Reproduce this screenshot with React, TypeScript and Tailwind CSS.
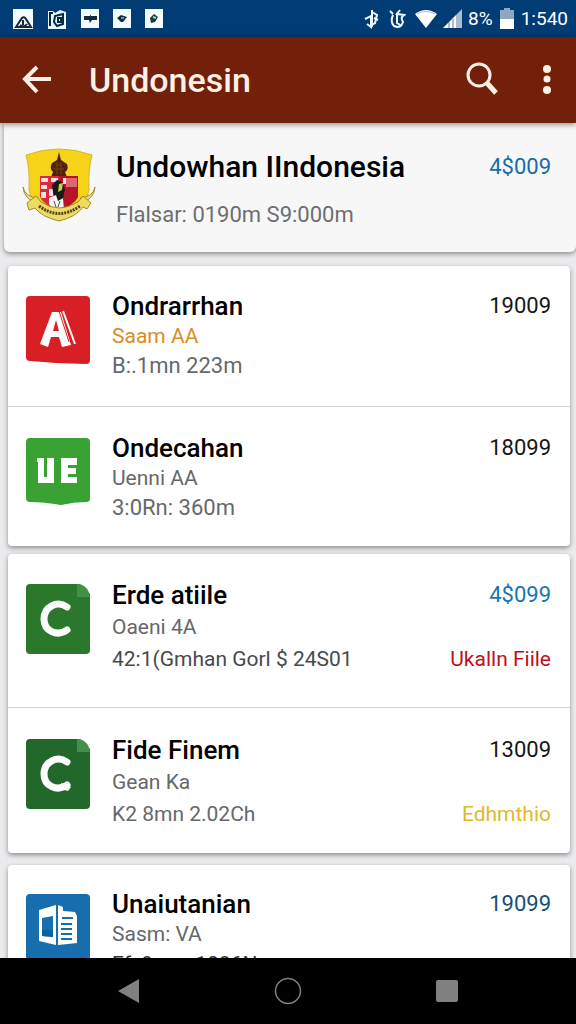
import type { ReactNode } from "react";

type Item = {
  id: number;
  icon: ReactNode;
  title: string;
  subtitle: string;
  subtitleColor?: string;
  detail: string;
  detailStyle?: string;
  price: string;
  priceColor?: string;
  status?: string;
  statusColor?: string;
  spacing: string;
};

function Crest() {
  return (
    <svg viewBox="0 0 74 76" className="h-[76px] w-[74px] shrink-0" aria-hidden="true">
      <path d="M4 8Q37-4 70 8Q66 23 67 43Q64 65 37 73Q10 65 7 43Q8 23 4 8Z" fill="#f6d318" stroke="#d8b52b" strokeWidth="1" />
      <path d="M37 5L39 13L45 17Q47 23 43 25L45 30H29L31 25Q27 22 30 16L35 13Z" fill="#50230f" />
      <path d="M34 18H40M32 22H42M35 15V27M39 15V27" stroke="#7a3a1c" strokeWidth="1" />
      <path d="M18 29H37V62Q22 59 18 50Z" fill="#d9293c" />
      <path d="M37 29H56V50Q52 59 37 62Z" fill="#b51525" />
      <path d="M19 31H26V35H19ZM29 31H36V35H29ZM19 38H25V42H19ZM27 42H31V49H27ZM19 45H24V51H19ZM41 31H46V37H41Z" fill="#f6dfe0" />
      <path d="M44 31H55V40H44Z" fill="#dd6672" />
      <path d="M30 38L35 33L40 35L43 42L40 56L34 54L31 45Z" fill="#171a19" />
      <path d="M37 37L41 36L40 43L36 45Z" fill="#c6ca4d" />
      <path d="M27 51L34 48L36 54L41 51L42 63L31 62L27 57Z" fill="#f4f5f2" />
      <path d="M32 54L34 60M38 54L36 60" stroke="#555" strokeWidth="1" />
      <path d="M1 40Q3 50 16 51L12 55Q2 51 1 40ZM73 40Q71 50 58 51L62 55Q72 51 73 40Z" fill="#edda78" stroke="#a78b24" strokeWidth="1" />
      <path d="M5 56L14 49L19 55Q37 67 56 55L61 49L69 56L65 62L61 60Q54 70 37 74Q20 70 13 61L7 63Z" fill="#eedb62" stroke="#a18a25" strokeWidth="1" />
      <path d="M17 59Q37 74 58 59" fill="none" stroke="#51451d" strokeWidth="3" strokeDasharray="2 1" />
    </svg>
  );
}

function RedBadge() {
  return (
    <svg viewBox="0 0 64 68" className="h-[68px] w-16" aria-hidden="true">
      <path d="M4 0H60Q64 0 64 4V64Q64 68 60 68L30 67L4 65Q0 65 0 61V4Q0 0 4 0Z" fill="#d91f26" />
      <path d="M26 16H35L45 49L36 51L33 41H25L22 51L14 48ZM30 24L27 35H33Z" fill="#fff" fillRule="evenodd" />
      <path d="M37 15L49 48" stroke="#fff" strokeWidth="2" />
      <path d="M33 15L43 46" stroke="#d91f26" strokeWidth="1" />
    </svg>
  );
}

function GreenBadge() {
  return (
    <svg viewBox="0 0 64 67" className="h-[67px] w-16" aria-hidden="true">
      <path d="M4 0H60Q64 0 64 4V61Q64 64 60 64Q48 64 35 67Q18 64 4 64Q0 64 0 60V4Q0 0 4 0Z" fill="#39a233" />
      <path d="M11 20H18V39H21V20H28V45H12V24H11ZM35 20H51V27H42V30H50V36H42V39H51V45H35Z" fill="#fff" />
    </svg>
  );
}

function FileBadge({ tail = false }: { tail?: boolean }) {
  return (
    <svg viewBox="0 0 64 70" className="h-[70px] w-16" aria-hidden="true">
      <path d="M4 0H53L64 10V66Q64 70 60 70H4Q0 70 0 66V4Q0 0 4 0Z" fill={tail ? "#22682a" : "#2b782d"} />
      <path d="M51 0H54Q63 3 64 13H51Z" fill="#439148" />
      <path d="M41 23C31 16 18 23 18 35C18 47 31 53 41 46" fill="none" stroke="#fff" strokeWidth="7" strokeLinecap="round" />
      {tail && <path d="M35 44L45 48L42 52L35 50Z" fill="#fff" />}
    </svg>
  );
}

function BookBadge() {
  return (
    <svg viewBox="0 0 64 66" className="h-[66px] w-16" aria-hidden="true">
      <rect width="64" height="66" rx="4" fill="#176eae" />
      <path d="M13 16L30 11V51L13 47ZM16 24V42L27 43V22ZM32 11L37 13V17L49 18L51 22V49L32 51Z" fill="#fff" fillRule="evenodd" />
      <path d="M16 36H27V43L16 42Z" fill="#0b609e" />
      <path d="M36 24H47M35 30H46M35 35H46M35 40H46M35 45H46" stroke="#176eae" strokeWidth="2" />
    </svg>
  );
}

const groups: Item[][] = [
  [
    {
      id: 1,
      icon: <RedBadge />,
      title: "Ondrarrhan",
      subtitle: "Saam AA",
      subtitleColor: "text-[#dc8c22]",
      detail: "B:.1mn 223m",
      price: "19009",
      spacing: "pt-[25px] pb-[25px] leading-[30px]",
    },
    {
      id: 2,
      icon: <GreenBadge />,
      title: "Ondecahan",
      subtitle: "Uenni AA",
      detail: "3:0Rn: 360m",
      price: "18099",
      spacing: "pt-[26px] pb-[23px] leading-[30px]",
    },
  ],
  [
    {
      id: 3,
      icon: <FileBadge />,
      title: "Erde atiile",
      subtitle: "Oaeni 4A",
      detail: "42:1(Gmhan Gorl $ 24S01",
      detailStyle: "text-[21px] text-[#48494b]",
      price: "4$099",
      priceColor: "text-[#1674b5]",
      status: "Ukalln Fiile",
      statusColor: "text-[#c01020]",
      spacing: "pt-[25px] pb-8 leading-8",
    },
    {
      id: 4,
      icon: <FileBadge tail />,
      title: "Fide Finem",
      subtitle: "Gean Ka",
      detail: "K2 8mn 2.02Ch",
      detailStyle: "text-[21px]",
      price: "13009",
      status: "Edhmthio",
      statusColor: "text-[#dfb82c]",
      spacing: "pt-[26px] pb-[23px] leading-8",
    },
  ],
  [
    {
      id: 5,
      icon: <BookBadge />,
      title: "Unaiutanian",
      subtitle: "Sasm: VA",
      detail: "Ef: 9mm 1086N",
      detailStyle: "text-[21px] text-[#333]",
      price: "19099",
      priceColor: "text-[#174e78]",
      spacing: "pt-6 pb-[25px] leading-[30px]",
    },
  ],
];

function StatusBar() {
  return (
    <div className="flex h-[37px] shrink-0 items-center justify-between bg-[#023c75] pr-2 pl-3 text-white">
      <div className="flex items-center gap-3">
        <svg viewBox="0 0 22 22" className="size-[22px]" aria-hidden="true">
          <path d="M1 1H21V21H1Z" fill="#f3fbff" />
          <path d="M4 19L10 10Q12 8 14 11L19 19ZM8 17Q12 20 15 16M11 12V17" fill="none" stroke="#172a38" strokeWidth="2" />
        </svg>
        <svg viewBox="0 0 22 22" className="size-[22px]" aria-hidden="true">
          <path d="M2 3H7L9 5L14 2L20 4V21H2Z" fill="#e8f8ff" />
          <path d="M4 18V5H7M9 8L17 6V16L11 18L8 14ZM12 10H15V14H12Z" fill="none" stroke="#082943" strokeWidth="2" />
        </svg>
        <svg viewBox="0 0 20 20" className="size-5" aria-hidden="true">
          <path d="M1 0H19V19H1Z" fill="#f3fbff" />
          <path d="M4 7H10L11 5V7H17V11H12L10 14L9 11H4Z" fill="#102c40" />
        </svg>
        <svg viewBox="0 0 20 20" className="size-5" aria-hidden="true">
          <path d="M1 0H19V19H1Z" fill="#f3fbff" />
          <path d="M5 9L9 6L15 8L11 13H9Z" fill="#102c40" />
          <path d="M9 9H12" stroke="#e8f8ff" />
        </svg>
        <svg viewBox="0 0 20 20" className="size-5" aria-hidden="true">
          <path d="M1 0H19V19H1Z" fill="#f3fbff" />
          <path d="M6 9L10 5L14 8L11 13L7 14Z" fill="#173b3b" />
          <path d="M9 8L12 9" stroke="#9ed5cb" strokeWidth="2" />
        </svg>
      </div>
      <div className="flex items-center">
        <svg viewBox="0 0 16 20" className="mr-2 h-5 w-4" aria-hidden="true">
          <path d="M1 10L7 7V18L3 15M8 1V18M8 3L13 6L11 14L6 17M10 9L14 11" fill="none" stroke="#eef7ff" strokeWidth="2" />
        </svg>
        <svg viewBox="0 0 18 20" className="mr-2 h-5 w-[18px]" aria-hidden="true">
          <path d="M2 2L5 5M12 1L8 6M5 6Q2 13 6 17Q13 20 15 13Q12 8 16 6L9 5V14L14 17" fill="none" stroke="#eef7ff" strokeWidth="2" />
        </svg>
        <svg viewBox="0 0 24 20" className="mr-1 h-5 w-6" aria-hidden="true">
          <path d="M1 5Q12-3 23 5L12 19Z" fill="#fff" />
          <path d="M3 5Q12 0 21 5" fill="none" stroke="#aebfce" strokeWidth="1" />
        </svg>
        <svg viewBox="0 0 20 20" className="mr-1.5 size-5" aria-hidden="true">
          <path d="M1 19L14 6V19Z" fill="#fff" />
          <path d="M14 6L20 0V19H14Z" fill="#a8bdd0" />
          <path d="M7 13V19M11 10V19" stroke="#667f8f" strokeWidth="1" />
        </svg>
        <span className="text-[19px] leading-5">8%</span>
        <svg viewBox="0 0 16 22" className="mr-1.5 ml-1.5 h-[22px] w-4" aria-hidden="true">
          <path d="M5 0H11V2H15V12H1V2H5Z" fill="#8da9c2" />
          <path d="M1 11H15V21H1Z" fill="#fff" />
        </svg>
        <span className="text-[19px] leading-5">1:540</span>
      </div>
    </div>
  );
}

function AppBar() {
  return (
    <header className="relative z-10 flex h-[86px] shrink-0 items-center bg-[#722009] pr-3 pl-[22px] text-[#fff0e6] shadow-[0_1px_6px_rgba(0,0,0,0.5)]">
      <button type="button" aria-label="Back">
        <svg viewBox="0 0 30 30" className="size-[30px]" fill="none" stroke="currentColor" strokeWidth="4">
          <path d="M15 2L3 14L15 27M3 14H29" />
        </svg>
      </button>
      <h1 className="ml-[37px] flex-1 text-[34px] leading-10 font-medium">Undonesin</h1>
      <button type="button" aria-label="Search" className="mr-8">
        <svg viewBox="0 0 32 36" className="h-9 w-8" fill="none" stroke="currentColor" strokeWidth="3">
          <circle cx="13" cy="13" r="11" />
          <path d="M21 21L30 31" strokeWidth="5" />
        </svg>
      </button>
      <button type="button" aria-label="More options" className="flex w-[34px] justify-center">
        <svg viewBox="0 0 8 30" className="h-[30px] w-2" fill="currentColor">
          <circle cx="4" cy="4" r="4" />
          <circle cx="4" cy="14" r="3.5" />
          <circle cx="4" cy="25" r="4" />
        </svg>
      </button>
    </header>
  );
}

function ItemRow({ item }: { item: Item }) {
  return (
    <li className={`flex border-gray-300 pr-[19px] pl-[18px] not-last:border-b ${item.spacing}`}>
      <div className="mt-[5px] mr-[22px] h-0 w-16 shrink-0">{item.icon}</div>
      <div className="min-w-0 flex-1 whitespace-nowrap text-[#66686b]">
        <h2 className="text-[26px] font-medium text-black">{item.title}</h2>
        <p className={`text-[21px] ${item.subtitleColor ?? ""}`}>{item.subtitle}</p>
        <p className={item.detailStyle ?? "text-[22px]"}>{item.detail}</p>
      </div>
      <div className="flex flex-col justify-between text-right">
        <span className={`text-[22px] ${item.priceColor ?? "text-[#161616]"}`}>{item.price}</span>
        {item.status && <span className={`text-[21px] ${item.statusColor}`}>{item.status}</span>}
      </div>
    </li>
  );
}

export default function App() {
  return (
    <div className="flex h-screen flex-col overflow-hidden bg-[#ebebed] font-[Roboto,sans-serif]">
      <StatusBar />
      <AppBar />

      <main className="min-h-0 flex-1 overflow-hidden">
        <section className="ml-1 flex rounded-b-md bg-[#f7f7f8] pt-6 pr-[25px] pb-[21px] pl-[18px] shadow-[0_2px_5px_rgba(0,0,0,0.4)]">
          <Crest />
          <div className="ml-5 flex-1 whitespace-nowrap">
            <h2 className="text-[30px] leading-10 font-medium text-black">Undowhan IIndonesia</h2>
            <p className="mt-3 text-[22px] leading-8 text-[#6d6e70]">Flalsar: 0190m S9:000m</p>
          </div>
          <span className="text-[22px] leading-10 text-[#166ba8]">4$009</span>
        </section>

        {groups.map((items, i) => (
          <ul
            key={i}
            className={`mr-1.5 ml-2 rounded bg-white shadow-[0_2px_5px_rgba(0,0,0,0.4)] ${
              i === 0 ? "mt-3.5" : i === 1 ? "mt-2" : "mt-3"
            }`}
          >
            {items.map((item) => (
              <ItemRow key={item.id} item={item} />
            ))}
          </ul>
        ))}
      </main>

      <nav className="grid h-[66px] shrink-0 grid-cols-3 bg-black px-[50px] text-[#808080]">
        <button type="button" aria-label="Back" className="flex items-center justify-center">
          <svg viewBox="0 0 22 24" className="h-6 w-[22px]" fill="currentColor">
            <path d="M21 0V24L0 12Z" />
          </svg>
        </button>
        <button type="button" aria-label="Home" className="flex items-center justify-center">
          <svg viewBox="0 0 28 28" className="size-7" fill="none" stroke="currentColor" strokeWidth="1.5">
            <circle cx="14" cy="14" r="12.5" />
          </svg>
        </button>
        <button type="button" aria-label="Recent apps" className="flex items-center justify-center">
          <svg viewBox="0 0 22 22" className="size-[22px]" fill="currentColor">
            <rect width="22" height="22" rx="2" />
          </svg>
        </button>
      </nav>
    </div>
  );
}
